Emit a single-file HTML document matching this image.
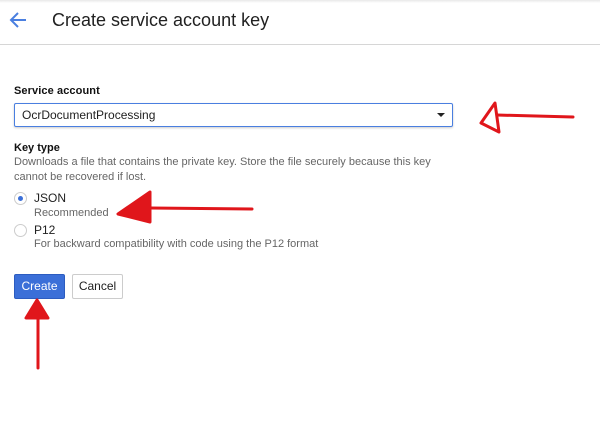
<!DOCTYPE html><html><head><style>
body{margin:0;width:600px;height:446px;background:#fff;font-family:"Liberation Sans",Arial,sans-serif;position:relative;overflow:hidden}
.a{position:absolute;white-space:nowrap}
</style></head><body>
<div class="a" style="left:0;top:0;width:600px;height:3px;background:linear-gradient(#e8e8e8,#fff)"></div>
<svg class="a" style="top:10px;left:8px" width="22" height="20" viewBox="0 0 22 20"><path d="M18 10H4M10 3L3 10l7 7" stroke="#4a7fe0" stroke-width="2" fill="none"/></svg>
<div class="a" style="left:52px;top:10px;font-size:18px;color:#212121">Create service account key</div>
<div class="a" style="left:0;top:44px;width:600px;height:1px;background:#d6d6d6"></div>
<div class="a" style="left:14px;top:85px;font-size:11px;color:#111;font-weight:bold;letter-spacing:0.1px">Service account</div>
<div class="a" style="left:14px;top:103px;width:437px;height:22px;border:1px solid #4a7fe0;border-radius:2px;box-shadow:0 1px 2px rgba(0,0,0,.2)"></div>
<div class="a" style="left:22px;top:108px;font-size:12px;color:#212121">OcrDocumentProcessing</div>
<div class="a" style="left:437px;top:113px;width:0;height:0;border-left:4px solid transparent;border-right:4px solid transparent;border-top:4px solid #222"></div>
<div class="a" style="left:14px;top:142px;font-size:11px;color:#111;font-weight:bold">Key type</div>
<div class="a" style="left:14px;top:155px;font-size:11px;color:#666;line-height:15px">Downloads a file that contains the private key. Store the file securely because this key<br>cannot be recovered if lost.</div>
<div class="a" style="left:14px;top:192px;width:11px;height:11px;border:1px solid #ccc;border-radius:50%"></div>
<div class="a" style="left:18px;top:196px;width:5px;height:5px;background:#3b6fd8;border-radius:50%"></div>
<div class="a" style="left:34px;top:191px;font-size:12px;color:#212121">JSON</div>
<div class="a" style="left:34px;top:207px;font-size:11px;color:#666">Recommended</div>
<div class="a" style="left:14px;top:224px;width:11px;height:11px;border:1px solid #ccc;border-radius:50%"></div>
<div class="a" style="left:34px;top:223px;font-size:12px;color:#212121">P12</div>
<div class="a" style="left:34px;top:238px;font-size:11px;color:#666">For backward compatibility with code using the P12 format</div>
<div class="a" style="left:14px;top:274px;background:#3b6fd8;border:1px solid #2c5cc0;border-radius:2px;color:#fff;font-size:12px;line-height:23px;text-align:center;box-sizing:border-box;width:51px;height:25px">Create</div>
<div class="a" style="left:72px;top:274px;width:51px;height:25px;box-sizing:border-box;border:1px solid #ccc;border-radius:2px;color:#212121;font-size:12px;line-height:23px;text-align:center">Cancel</div>
<svg class="a" style="left:0;top:0" width="600" height="446">
<g stroke="#e0161b" stroke-width="3" fill="none" stroke-linecap="round" stroke-linejoin="round">
<path d="M573 117L497 115"/><path d="M495 103L481 123L499 132Z"/>
<path d="M252 209L150 208"/><path d="M150 192L118 214L150 222Z" fill="#e0161b"/>
<path d="M38 368L38 305"/><path d="M37 300L26 318L48 318Z" fill="#e0161b"/>
</g></svg>
</body></html>
